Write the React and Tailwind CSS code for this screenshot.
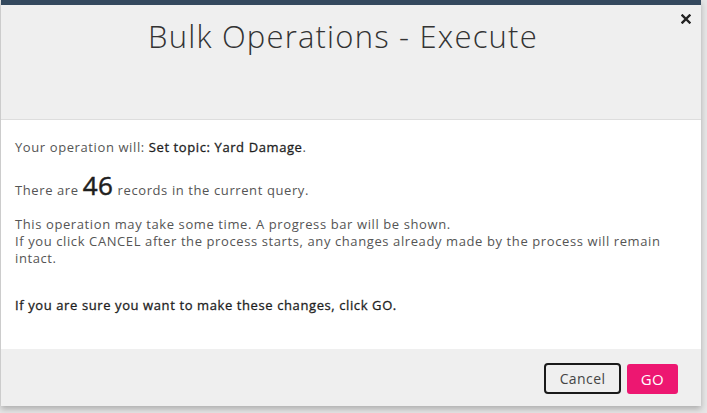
export default function App() {
  return (
    <div
      className="w-[707px] h-[413px] bg-[#e6e6e6] overflow-hidden relative"
      style={{ fontFamily: '"Open Sans", "Liberation Sans", sans-serif' }}
    >
      <div className="ml-[1px] w-[700px] flex flex-col shadow-[0_3px_6px_rgba(0,0,0,0.25)]">
        <div className="h-[5px] bg-[#34495e]" />
        <div className="relative h-[115px] bg-[#efefef] border-b border-[#dddddd] flex justify-center pr-[16px]">
          <h1 className="mt-[11px] text-[31px] font-light leading-[40px] text-[#333] tracking-[1.2px]">
            Bulk Operations - Execute
          </h1>
          <button className="absolute right-[10px] top-[9px] w-[10px] h-[10px] flex items-center justify-center">
            <svg viewBox="0 0 10 10" width="10" height="10">
              <path d="M1.5 1.5 L8.5 8.5 M8.5 1.5 L1.5 8.5" stroke="#222" strokeWidth="2.4" strokeLinecap="square" />
            </svg>
          </button>
        </div>
        <div className="h-[229px] bg-white px-[14px] pt-[19px] text-[13px] leading-[17px] text-[#555] tracking-[0.6px]">
          <p>
            Your operation will:{' '}
            <span className="text-[#1e1e1e] [-webkit-text-stroke:0.3px_#1e1e1e]">Set topic: Yard Damage</span>.
          </p>
          <p className="mt-[21px]">
            There are{' '}
            <span className="text-[26px] leading-[17px] text-[#1e1e1e] [-webkit-text-stroke:0.5px_#1e1e1e]">46</span>{' '}
            records in the current query.
          </p>
          <p className="mt-[17px]">
            This operation may take some time. A progress bar will be shown.
            <br />
            If you click CANCEL after the process starts, any changes already made by the process will remain
            intact.
          </p>
          <p className="mt-[30px] text-[#1e1e1e] [-webkit-text-stroke:0.3px_#1e1e1e]">
            If you are sure you want to make these changes, click GO.
          </p>
        </div>
        <div className="h-[57px] bg-[#efefef] flex justify-end items-start pt-[14px] pr-[23px] gap-[6px]">
          <button className="w-[77px] h-[31px] border-2 border-[#1a1a1a] rounded-[4px] text-[14px] text-[#444] tracking-[0.4px] flex items-center justify-center">
            Cancel
          </button>
          <button className="w-[51px] h-[30px] mt-[1px] bg-[#ed1771] rounded-[3px] text-[15px] text-white tracking-[0.4px] flex items-center justify-center">
            GO
          </button>
        </div>
      </div>
    </div>
  );
}
